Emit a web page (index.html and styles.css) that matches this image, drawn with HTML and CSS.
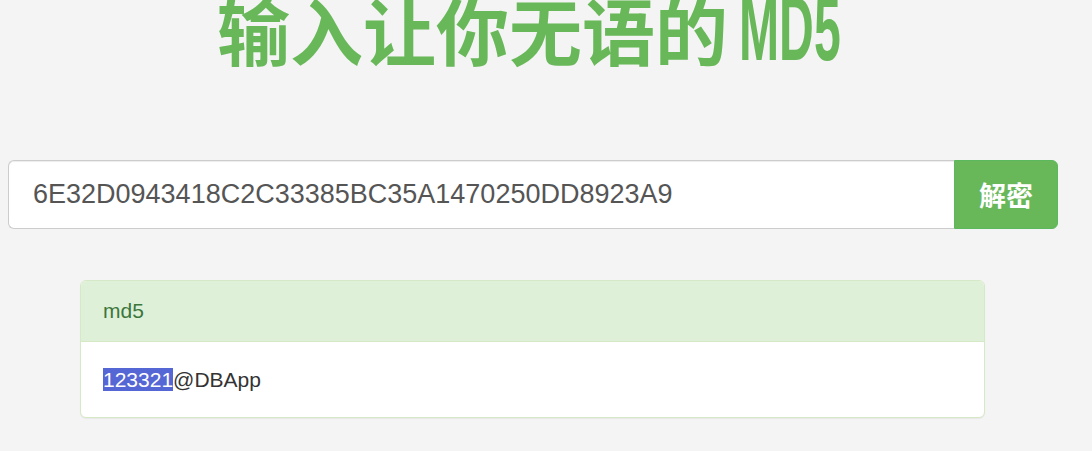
FILE: index.html
```html
<!DOCTYPE html>
<html lang="zh-CN">
<head>
  <meta charset="UTF-8">
  <title>MD5</title>
  <link rel="stylesheet" href="styles.css">
</head>
<body>
  <div class="container">
    <h1 class="title">输入让你无语的<span class="latin"><span class="latin-inner">MD5</span></span></h1>

    <form class="search">
      <input type="text" class="search-input" value="6E32D0943418C2C33385BC35A1470250DD8923A9">
      <button type="button" class="search-btn">解密</button>
    </form>

    <div class="panel">
      <div class="panel-heading">md5</div>
      <div class="panel-body"><span class="picked">123321</span>@DBApp</div>
    </div>
  </div>
</body>
</html>
```

FILE: styles.css
```css
html, body {
  height: 100%;
  overflow: hidden;
}
body {
  margin: 0;
  background: #f4f4f4;
  font-family: "Liberation Sans", Arial, "Noto Sans CJK SC", sans-serif;
  color: #333;
}
.container {
  width: 1050px;
  margin: 0 8px;
}
.title {
  height: 85px;
  margin: -22px 0 0;
  padding-right: 9px;
  text-align: center;
  font-family: "Noto Sans CJK SC", sans-serif;
  font-size: 73px;
  font-weight: 700;
  line-height: 100px;
  color: #68b85a;
  white-space: nowrap;
}
.title .latin {
  display: inline-block;
  width: 101px;
  margin-left: 11px;
  text-align: left;
  vertical-align: baseline;
  line-height: 100px;
}
.title .latin-inner {
  display: inline-block;
  font-family: "Liberation Sans", sans-serif;
  font-size: 90px;
  font-weight: bold;
  transform: scaleX(0.535);
  transform-origin: left bottom;
}
.search {
  display: flex;
  margin-top: 97px;
  height: 69px;
}
.search-input {
  flex: 1;
  box-sizing: border-box;
  height: 69px;
  padding: 0 24px;
  border: 1px solid #ccc;
  border-right: none;
  border-radius: 6px 0 0 6px;
  background: #fff;
  font-family: "Liberation Sans", Arial, sans-serif;
  font-size: 27px;
  color: #555;
  outline: none;
  box-shadow: inset 0 1px 1px rgba(0,0,0,0.075);
}
.search-btn {
  width: 104px;
  height: 69px;
  border: 1px solid #5cb85c;
  border-radius: 0 6px 6px 0;
  background: #68b85a;
  color: #fff;
  font-family: "Noto Sans CJK SC", sans-serif;
  font-size: 27px;
  font-weight: bold;
  cursor: pointer;
}
.panel {
  margin: 51px 73px 0 72px;
  background: #fff;
  border: 1px solid #d6e9c6;
  border-radius: 6px;
  box-shadow: 0 1px 1px rgba(0,0,0,0.05);
}
.panel-heading {
  height: 61px;
  box-sizing: border-box;
  padding: 0 22px;
  background: #dff0d8;
  border-bottom: 1px solid #d6e9c6;
  border-radius: 5px 5px 0 0;
  color: #3c763d;
  font-size: 21px;
  line-height: 60px;
}
.panel-body {
  height: 75px;
  box-sizing: border-box;
  padding: 0 22px;
  font-size: 21px;
  line-height: 75px;
  color: #333;
}
.picked {
  background: #5566d5;
  color: #fff;
}
```
